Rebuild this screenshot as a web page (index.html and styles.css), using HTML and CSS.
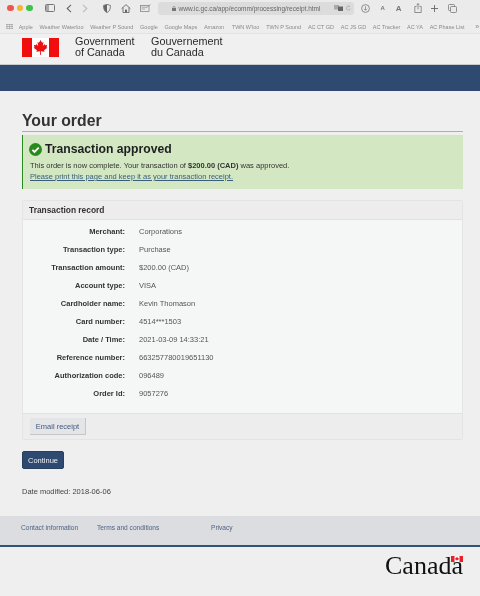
FILE: index.html
```html
<!DOCTYPE html>
<html lang="en">
<head>
<meta charset="utf-8">
<title>Your order</title>
<link rel="stylesheet" href="styles.css">
</head>
<body>
<div class="browser">
  <div class="toolbar">
    <div class="lights"><i class="light red"></i><i class="light amber"></i><i class="light green"></i></div>
    <svg class="ic sidebar" width="10" height="8" viewBox="0 0 10 8"><rect x=".5" y=".5" width="9" height="7" rx="1" fill="none" stroke="#777"/><rect x="1" y="1" width="3" height="6" fill="#aaa"/></svg>
    <svg class="ic back" width="6" height="9" viewBox="0 0 6 9"><path d="M5 .8 1.2 4.500 5 8.200" fill="none" stroke="#666" stroke-width="1.100"/></svg>
    <svg class="ic fwd" width="6" height="9" viewBox="0 0 6 9"><path d="M1 .8 4.800 4.500 1 8.200" fill="none" stroke="#bbb" stroke-width="1.100"/></svg>
    <svg class="ic shield" width="8" height="9" viewBox="0 0 8 9"><path d="M4 .4 7.400 1.400C7.600 5 6.400 7.400 4 8.600 1.600 7.400.4 5 .6 1.400Z" fill="none" stroke="#666" stroke-width=".8"/><path d="M4 .4 .6 1.400C.4 5 1.600 7.400 4 8.600Z" fill="#666"/></svg>
    <svg class="ic home" width="10" height="9" viewBox="0 0 10 9"><path d="M.6 4.600 5 .7l4.400 3.900M2 3.600v5h6v-5" fill="none" stroke="#666" stroke-width=".9"/><rect x="4" y="5.600" width="2" height="3" fill="#666"/></svg>
    <svg class="ic mail" width="11" height="8" viewBox="0 0 11 8"><rect x=".5" y="1.500" width="8.500" height="6" fill="none" stroke="#888" stroke-width=".8"/><path d="M1.500 3.200h5M1.500 5h3.500M6 4 10.500.5" fill="none" stroke="#888" stroke-width=".7"/></svg>
    <div class="address">
      <svg class="lock" width="4" height="5" viewBox="0 0 4 5"><rect y="2" width="4" height="3" fill="#777"/><path d="M1 2V1.200a1 1 0 0 1 2 0V2" fill="none" stroke="#777" stroke-width=".6"/></svg>
      <span class="url">www.ic.gc.ca/app/ecomm/processing/receipt.html</span>
      <svg class="translate" width="9" height="6" viewBox="0 0 9 6"><rect width="5" height="4.500" fill="#aaa"/><rect x="4" y="1.500" width="5" height="4.500" fill="#666"/></svg>
      <svg class="reload" width="5" height="6" viewBox="0 0 5 6"><path d="M4.300 3.500A2 2 0 1 1 3.300 1.400M2.800.4l.8 1-1.100.6" fill="none" stroke="#999" stroke-width=".6"/></svg>
    </div>
    <svg class="ic download" width="9" height="9" viewBox="0 0 9 9"><circle cx="4.500" cy="4.500" r="3.900" fill="none" stroke="#777" stroke-width=".8"/><path d="M4.500 2.200v4M3 4.800l1.500 1.500L6 4.800" fill="none" stroke="#777" stroke-width=".7"/></svg>
    <span class="font-small">A</span>
    <span class="font-large">A</span>
    <svg class="ic share" width="8" height="10" viewBox="0 0 8 10"><path d="M2.500 3.500H.8v6h6.400v-6H5.500M4 6.500V.7M2.500 2 4 .6 5.500 2" fill="none" stroke="#777" stroke-width=".8"/></svg>
    <svg class="ic plus" width="7" height="7" viewBox="0 0 7 7"><path d="M3.500 0v7M0 3.500h7" stroke="#666" stroke-width=".9"/></svg>
    <svg class="ic tabs" width="9" height="9" viewBox="0 0 9 9"><rect x=".5" y=".5" width="6" height="6" rx="1" fill="none" stroke="#777" stroke-width=".8"/><rect x="2.500" y="2.500" width="6" height="6" rx="1" fill="#e9e9e9" stroke="#777" stroke-width=".8"/></svg>
  </div>
  <div class="bookmarks">
    <svg class="grid-ic" width="7" height="5" viewBox="0 0 7 5"><path d="M0 .5h7M0 2.500h7M0 4.500h7M1 0v5M3.500 0v5M6 0v5" stroke="#999" stroke-width=".6"/></svg>
    <span>Apple</span><span>Weather Waterloo</span><span>Weather P Sound</span><span>Google</span><span>Google Maps</span><span>Amazon</span><span class="wide">TWN W'loo</span><span>TWN P Sound</span><span>AC CT GD</span><span>AC JS GD</span><span>AC Tracker</span><span>AC YA</span><span>AC Phase List</span><span class="more">»</span>
  </div>
</div>

<header class="gov-header">
  <svg class="flag" width="37" height="19" viewBox="0 0 37 19">
    <rect width="37" height="19" fill="#fff"/>
    <rect width="10" height="19" fill="#f20d0d"/>
    <rect x="27" width="10" height="19" fill="#f20d0d"/>
    <path fill="#ec1010" d="M18.500 1.900 16.900 4.700 15.500 4 16.200 8 14.300 6 13.900 7.200 11.800 6.900 12.500 9.200 11.600 9.700 14.900 12.300 14.400 13.800 18.100 13.300 18 16.800H19L18.900 13.300 22.600 13.800 22.100 12.300 25.400 9.700 24.500 9.200 25.200 6.900 23.100 7.200 22.700 6 20.800 8 21.500 4 20.100 4.700Z"/>
  </svg>
  <div class="sig en">Government<br>of Canada</div>
  <div class="sig fr">Gouvernement<br>du Canada</div>
</header>
<div class="band"></div>

<main class="content">
  <h1>Your order</h1>
  <section class="alert">
    <h2><svg class="check" width="13" height="13" viewBox="0 0 13 13"><circle cx="6.500" cy="6.500" r="6.500" fill="#2b8a1f"/><path d="M3.400 6.800 5.500 8.900 9.700 4.600" fill="none" stroke="#fff" stroke-width="1.800"/></svg>Transaction approved</h2>
    <p>This order is now complete. Your transaction of <strong>$200.00 (CAD)</strong> was approved.</p>
    <a href="#">Please print this page and keep it as your transaction receipt.</a>
  </section>

  <section class="panel">
    <div class="panel-head">Transaction record</div>
    <dl class="record">
      <dt>Merchant:</dt><dd>Corporations</dd>
      <dt>Transaction type:</dt><dd>Purchase</dd>
      <dt>Transaction amount:</dt><dd>$200.00 (CAD)</dd>
      <dt>Account type:</dt><dd>VISA</dd>
      <dt>Cardholder name:</dt><dd>Kevin Thomason</dd>
      <dt>Card number:</dt><dd>4514***1503</dd>
      <dt>Date / Time:</dt><dd>2021-03-09 14:33:21</dd>
      <dt>Reference number:</dt><dd>663257780019651130</dd>
      <dt>Authorization code:</dt><dd>096489</dd>
      <dt>Order Id:</dt><dd>9057276</dd>
    </dl>
    <div class="panel-foot"><button class="btn-light" type="button">Email receipt</button></div>
  </section>

  <button class="btn-primary" type="button">Continue</button>
  <p class="modified">Date modified: 2018-06-06</p>
</main>

<footer>
  <nav class="foot-links">
    <a href="#">Contact information</a>
    <a href="#">Terms and conditions</a>
    <a href="#">Privacy</a>
  </nav>
  <div class="wordmark">
    <span class="canada">Canada<svg class="mini-flag" width="12" height="6" viewBox="0 0 12 6"><rect width="12" height="6" fill="#fff"/><rect width="3.500" height="6" fill="#e8202a"/><rect x="8.500" width="3.500" height="6" fill="#e8202a"/><path d="M6 .8 7.200 2.300 8 2.200 7.500 3.800 6.200 3.900V5H5.800V3.900L4.500 3.800 4 2.200 4.800 2.300Z" fill="#e8202a"/></svg></span>
  </div>
</footer>
</body>
</html>
```
FILE: styles.css
```css
* { box-sizing: border-box; }
html, body { margin: 0; padding: 0; }
body {
  width: 480px;
  height: 596px;
  overflow: hidden;
  background: #efefef;
  color: #333;
  font-family: "Liberation Sans", Arial, sans-serif;
  filter: blur(0.45px);
}

/* Browser chrome */
.browser { height: 34px; }
.toolbar {
  height: 20px;
  background: #ebebeb;
  display: flex;
  align-items: center;
  padding: 0 0 4px 7px;
}
.lights { display: flex; gap: 3px; }
.light { width: 6.500px; height: 6.500px; border-radius: 50%; display: block; }
.red { background: #f0544e; }
.amber { background: #f5b62d; }
.green { background: #3dc24a; }
.ic { flex: none; }
.sidebar { margin-left: 12px; }
.back { margin-left: 11px; }
.fwd { margin-left: 10px; }
.shield { margin-left: 15px; }
.home { margin-left: 10px; }
.mail { margin-left: 9px; }
.address {
  flex: none;
  width: 196px;
  height: 13px;
  margin-left: 7px;
  background: #dcdcdc;
  border-radius: 3px;
  display: flex;
  align-items: center;
  padding-left: 14px;
  color: #666;
  font-size: 6.500px;
}
.lock { flex: none; }
.url { margin-left: 3px; width: 155px; flex: none; white-space: nowrap; }
.translate { flex: none; }
.reload { margin-left: 3px; flex: none; }
.download { margin-left: 7px; }
.font-small { margin-left: 11px; font-size: 6px; color: #777; font-weight: bold; }
.font-large { margin-left: 11px; font-size: 8px; color: #777; font-weight: bold; }
.share { margin-left: 12px; }
.plus { margin-left: 9px; }
.tabs { margin-left: 10px; }
.bookmarks {
  height: 14px;
  background: #ededed;
  border-bottom: 1px solid #e2e2e2;
  display: flex;
  align-items: center;
  gap: 6.700px;
  padding-left: 6px;
  font-size: 5.500px;
  color: #8a8a8a;
  white-space: nowrap;
}
.grid-ic { flex: none; margin-right: -1px; }
.wide { margin-left: 1px; }
.more { margin-left: 4px; font-size: 7px; }

/* Government header */
.gov-header {
  height: 31px;
  background: #f0f0f0;
  border-bottom: 1px solid #c8ccd0;
  display: flex;
  align-items: center;
  padding: 0 0 4px 22px;
}
.flag { flex: none; }
.sig { font-size: 10.800px; line-height: 11px; color: #2a2a2a; }
.en { margin-left: 16px; width: 76px; }
.band { height: 26px; background: #2e4a70; }

/* Main */
.content { padding: 0 17px 0 22px; }
h1 {
  margin: 20px 0 0;
  height: 21px;
  font-size: 15.800px;
  line-height: 19px;
  font-weight: bold;
  color: #333;
  border-bottom: 1px solid #c9a3a3;
}
.alert {
  margin-top: 3px;
  height: 54px;
  background: #d3e7c3;
  border-left: 1px solid #2b8a1f;
  padding: 6px 0 0 6px;
  font-size: 7.500px;
  line-height: 11px;
  color: #333;
}
.alert h2 {
  margin: 0;
  display: flex;
  align-items: center;
  gap: 3px;
  height: 16px;
  font-size: 12.200px;
  font-weight: bold;
  color: #1e1e1e;
}
.check { flex: none; width: 13px; height: 13px; }
.alert p { margin: 3px 0 0 1px; }
.alert a { color: #3a5f7d; display: block; margin-left: 1px; }

.panel {
  margin-top: 11px;
  height: 240px;
  background: #ededed;
  border: 1px solid #e4e4e4;
  border-radius: 2px;
  display: flex;
  flex-direction: column;
}
.panel-head {
  height: 19px;
  padding-left: 6px;
  display: flex;
  align-items: center;
  font-size: 8.400px;
  font-weight: bold;
  color: #333;
  border-bottom: 1px solid #e2e2e2;
}
.record {
  margin: 0;
  height: 194px;
  padding-top: 2px;
  background: #f5f7f6;
  border-bottom: 1px solid #e2e2e2;
  display: grid;
  grid-template-columns: 102px 1fr;
  grid-auto-rows: 18px;
  column-gap: 14px;
  align-items: center;
  font-size: 7.500px;
}
.record dt { font-weight: bold; text-align: right; color: #333; }
.record dd { margin: 0; color: #555; }
.panel-foot { padding: 4px 0 0 7px; }
.btn-light {
  display: block;
  width: 56px;
  height: 17px;
  padding: 0;
  background: #e4e5e8;
  border: 0;
  border-right: 1px solid #c6c6c6;
  border-bottom: 1px solid #c6c6c6;
  color: #44597a;
  font: 7.500px "Liberation Sans", Arial, sans-serif;
}
.btn-primary {
  display: block;
  margin-top: 11px;
  width: 42px;
  height: 18px;
  padding: 0;
  background: #2e4a70;
  border: 1px solid #26405f;
  border-radius: 2px;
  color: #eef1f5;
  font: 7.500px "Liberation Sans", Arial, sans-serif;
}
.modified { margin: 18px 0 0; font-size: 7.500px; line-height: 10px; color: #444; }

/* Footer */
footer { margin-top: 19px; }
.foot-links {
  height: 31px;
  background: #dcdde1;
  border-bottom: 2px solid #34517a;
  display: grid;
  grid-template-columns: 76px 114px 1fr;
  align-items: center;
  padding: 0 0 7px 21px;
  font-size: 6.600px;
}
.foot-links a { color: #4f6380; text-decoration: none; }
.wordmark { display: flex; justify-content: flex-end; padding: 6px 17px 0 0; }
.canada {
  position: relative;
  font-family: "Liberation Serif", "Times New Roman", serif;
  font-size: 26px;
  line-height: 26px;
  color: #111;
}
.mini-flag { position: absolute; right: 0; top: 3px; }
```
